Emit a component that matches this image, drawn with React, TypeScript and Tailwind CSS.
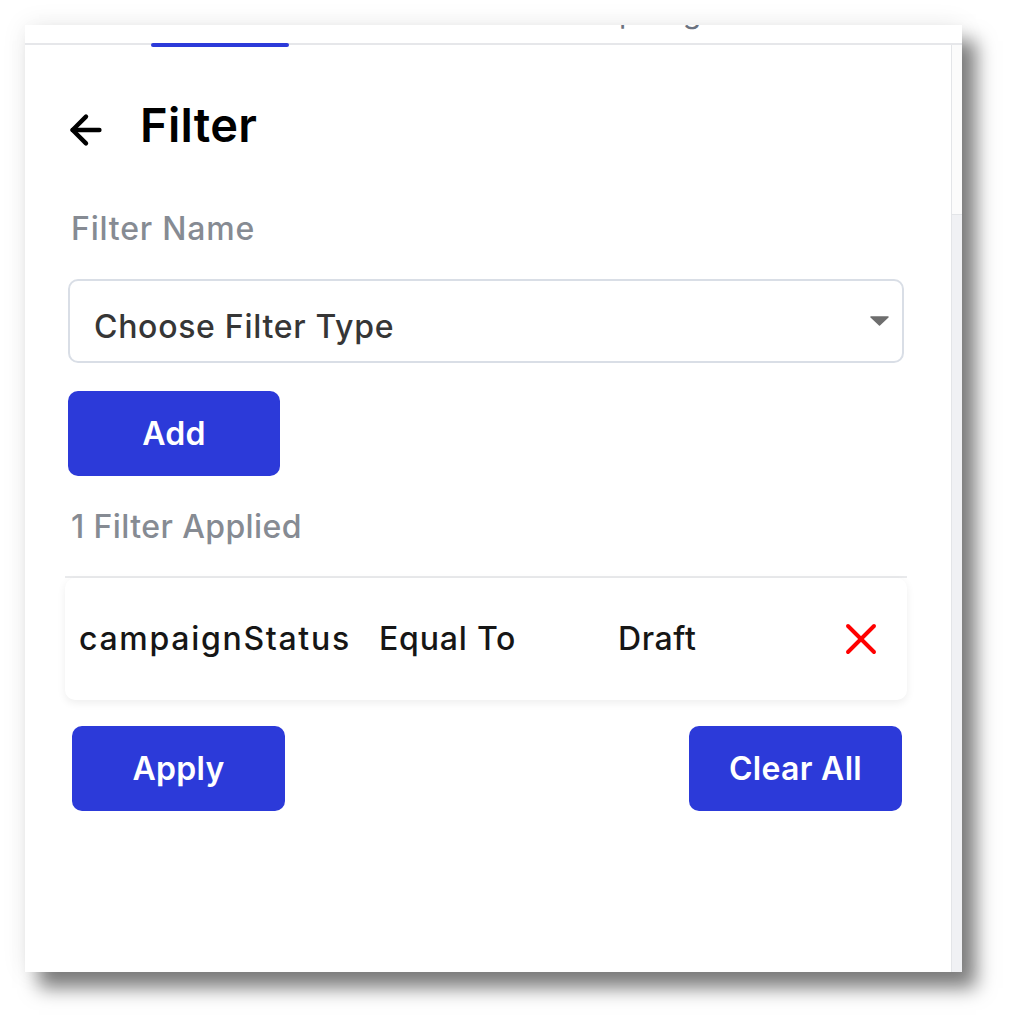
import React from 'react';
import { ArrowLeft, X } from 'lucide-react';

const BlueButton: React.FC<{ label: string }> = ({ label }) => (
  <button className="h-[85px] w-[213px] rounded-[10px] bg-[#2c3ad9] text-[32px] font-semibold leading-[32px] tracking-[0.3px] text-white">
    {label}
  </button>
);

export default function App() {
  return (
    <div className="min-h-screen bg-white p-[25px] font-[Inter,sans-serif]">
      <div className="flex h-[947px] w-[937px] flex-col bg-white shadow-[14px_16px_18px_rgba(0,0,0,0.5),0_0_24px_rgba(0,0,0,0.08)]">
        {/* tab strip, labels cut off above */}
        <div className="flex h-[18px] overflow-hidden">
          <div className="ml-[508px] -mt-[28px] text-[30px] leading-[30px] tracking-[7px] text-[#6b7280]">Campaign</div>
        </div>
        <div className="flex h-[2px] bg-[#e6e7ea]">
          <div className="ml-[126px] h-[4px] w-[138px] rounded-full bg-[#2c3ad9]" />
        </div>

        <div className="flex flex-1">
          <div className="flex-1 pl-[43px] pr-[47px] pt-[57px]">
            <div className="flex h-[46px] items-center">
              <ArrowLeft size={46} strokeWidth={2.3} className="-ml-[5px] mt-[10px] text-black" />
              <h1 className="ml-[31px] text-[47px] font-semibold leading-[46px] tracking-[0.3px] text-black">Filter</h1>
            </div>

            <p className="ml-[3px] mt-[65px] text-[32px] font-medium leading-[32px] tracking-[0.8px] text-[#868b93]">Filter Name</p>

            <div className="mt-[34px] flex h-[84px] items-center justify-between rounded-[10px] border-2 border-[#d9dee6] pl-[24px] pr-[13px]">
              <span className="mt-[12px] text-[32px] font-medium leading-[32px] tracking-[0.7px] text-[#363636]">Choose Filter Type</span>
              <svg width="19" height="10" viewBox="0 0 19 10">
                <path d="M1 1 L18 1 L9.5 9 Z" fill="#6e6e6e" stroke="#6e6e6e" strokeWidth="1.5" strokeLinejoin="round" />
              </svg>
            </div>

            <div className="mt-[28px]">
              <button className="h-[85px] w-[212px] rounded-[10px] bg-[#2c3ad9] text-[32px] font-semibold leading-[32px] tracking-[0.3px] text-white">
                Add
              </button>
            </div>

            <p className="ml-[3px] mt-[35px] text-[32px] font-medium leading-[32px] tracking-[0.4px] text-[#868b93]">1 Filter Applied</p>

            <div className="-mx-[3px] mt-[33px] h-[2px] bg-[#e9eaec]" />
            <div className="-mx-[3px] flex h-[122px] items-center rounded-[10px] bg-white pl-[14px] pr-[20px] shadow-[0_3px_8px_rgba(0,0,0,0.07)]">
              <span className="w-[300px] text-[32px] font-medium leading-[32px] tracking-[1.7px] text-[#161616]">campaignStatus</span>
              <span className="w-[239px] text-[32px] font-medium leading-[32px] tracking-[0.8px] text-[#161616]">Equal To</span>
              <span className="flex-1 text-[32px] font-medium leading-[32px] tracking-[0.6px] text-[#161616]">Draft</span>
              <X size={52} strokeWidth={1.8} className="text-[#ff0000]" />
            </div>

            <div className="mt-[26px] flex justify-between pl-[4px] pr-[2px]">
              <BlueButton label="Apply" />
              <BlueButton label="Clear All" />
            </div>
          </div>

          {/* scrollbar track */}
          <div className="flex w-[11px] flex-col border-l border-[#e3e5e8]">
            <div className="h-[170px] border-b border-[#e3e5e8] bg-[#fbfbfb]" />
            <div className="flex-1 bg-[#f0f1f4]" />
          </div>
        </div>
      </div>
    </div>
  );
}
